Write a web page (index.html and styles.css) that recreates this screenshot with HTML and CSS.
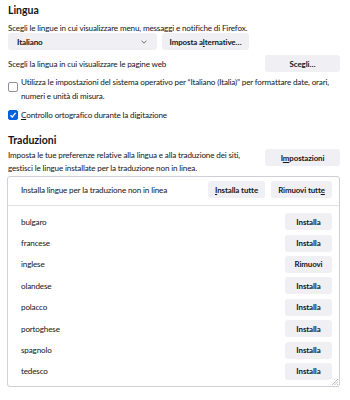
FILE: index.html
```html
<!DOCTYPE html>
<html lang="it">
<head>
  <meta charset="UTF-8" />
  <title>Lingua</title>
  <link rel="stylesheet" href="styles.css">
</head>
<body>
  <section class="group">
    <h2>Lingua</h2>
    <p class="desc">Scegli le lingue in cui visualizzare menu, messaggi e notifiche di Firefox.</p>
    <div class="row">
      <div class="select">
        <span>Italiano</span>
        <svg class="chev" width="6" height="4" viewBox="0 0 6 4"><path d="M0.5 0.8 L3 3.2 L5.5 0.8" fill="none" stroke="#5b5b66" stroke-width="0.9"/></svg>
      </div>
      <button class="btn alt">Imposta a<u>l</u>ternative…</button>
    </div>
    <div class="row spread web">
      <span>Scegli la lingua in cui visualizzare le pagine web</span>
      <button class="btn wide">Scegli…</button>
    </div>
    <label class="check">
      <span class="box"></span>
      <span>Utilizza le impostazioni del sistema operativo per “Italiano (Italia)” per formattare date, orari, numeri e unità di misura.</span>
    </label>
    <label class="check single">
      <span class="box on">
        <svg width="8" height="8" viewBox="0 0 8 8"><path d="M1.5 4.2 L3.3 6 L6.6 1.8" fill="none" stroke="#fff" stroke-width="1.3"/></svg>
      </span>
      <span><u>C</u>ontrollo ortografico durante la digitazione</span>
    </label>
  </section>

  <section class="group">
    <h2>Traduzioni</h2>
    <div class="row spread settings">
      <p class="desc">Imposta le tue preferenze relative alla lingua e alla traduzione dei siti, gestisci le lingue installate per la traduzione non in linea.</p>
      <button class="btn wide">I<u>m</u>postazioni</button>
    </div>
    <div class="panel">
      <div class="panel-head">
        <span>Installa lingue per la traduzione non in linea</span>
        <div class="head-btns">
          <button class="btn all-in"><u>I</u>nstalla tutte</button>
          <button class="btn all-out">Rimuovi tutt<u>e</u></button>
        </div>
      </div>
      <ul class="langs">
        <li><span>bulgaro</span><button class="btn small">Installa</button></li>
        <li><span>francese</span><button class="btn small">Installa</button></li>
        <li><span>inglese</span><button class="btn small">Rimuovi</button></li>
        <li><span>olandese</span><button class="btn small">Installa</button></li>
        <li><span>polacco</span><button class="btn small">Installa</button></li>
        <li><span>portoghese</span><button class="btn small">Installa</button></li>
        <li><span>spagnolo</span><button class="btn small">Installa</button></li>
        <li><span>tedesco</span><button class="btn small">Installa</button></li>
      </ul>
      <svg class="grip" width="7" height="7" viewBox="0 0 7 7"><path d="M7 1 L1 7 M7 3.5 L3.5 7 M7 6 L6 7" stroke="#a0a0a8" stroke-width="0.7"/></svg>
    </div>
  </section>
</body>
</html>
```

FILE: styles.css
```css
* {
  box-sizing: border-box;
}

body {
  margin: 0;
  padding: 3px 10px 0 8px;
  font-family: 'Lato', 'Noto Sans', sans-serif;
  font-size: 8.1px;
  letter-spacing: -0.15px;
  color: #15141a;
  background: #fff;
}

h2 {
  margin: 0;
  font-size: 10.5px;
  font-weight: 700;
  line-height: 15px;
  letter-spacing: 0;
}

p {
  margin: 0;
}

u {
  text-decoration-thickness: 0.5px;
  text-underline-offset: 1px;
}

.desc {
  line-height: 13px;
}

.group + .group {
  margin-top: 11px;
}

.group > .desc {
  margin-top: 4px;
}

.row {
  display: flex;
  align-items: center;
  gap: 5px;
  margin-top: -2px;
}

.spread {
  justify-content: space-between;
}

.web {
  margin-top: 5px;
}

.select {
  width: 149px;
  height: 17px;
  display: flex;
  align-items: center;
  justify-content: space-between;
  padding: 0 10px 0 9px;
  background: #f0f0f4;
  border-radius: 3px;
  font-weight: 700;
}

.btn {
  height: 17px;
  padding: 0;
  border: none;
  border-radius: 3px;
  background: #f0f0f4;
  color: #15141a;
  font-family: inherit;
  font-size: 7.9px;
  font-weight: 700;
  letter-spacing: -0.1px;
  white-space: nowrap;
}

.alt {
  width: 87px;
}

.wide {
  width: 75px;
}

.all-in {
  width: 57px;
}

.all-out {
  width: 61px;
}

.small {
  width: 47px;
}

.check {
  display: flex;
  align-items: flex-start;
  gap: 3px;
  margin-top: 3px;
  line-height: 14px;
}

.check .box {
  flex: none;
  width: 10px;
  height: 10px;
  margin-top: 7px;
  border: 1px solid #8f8f9d;
  border-radius: 2px;
  display: flex;
  align-items: center;
  justify-content: center;
}

.check.single {
  margin-top: 5px;
}

.check.single .box {
  margin-top: 2px;
}

.check .box.on {
  background: #0061e0;
  border-color: #0061e0;
}

.settings {
  margin-top: 1px;
  align-items: flex-start;
}

.settings .desc {
  width: 250px;
}

.panel {
  position: relative;
  margin: 1px 0 0 -1px;
  border: 1px solid #cfcfd8;
  border-radius: 3px;
  height: 211px;
}

.panel-head {
  display: flex;
  align-items: center;
  justify-content: space-between;
  padding: 4px 7px 7px 13px;
  border-bottom: 1px solid #e0e0e6;
}

.head-btns {
  display: flex;
  gap: 6px;
}

.langs {
  list-style: none;
  margin: 0;
  padding: 5px 7px 0 13px;
}

.langs li {
  display: flex;
  align-items: center;
  justify-content: space-between;
  height: 21.4px;
}

.grip {
  position: absolute;
  right: 1px;
  bottom: 1px;
}
```
